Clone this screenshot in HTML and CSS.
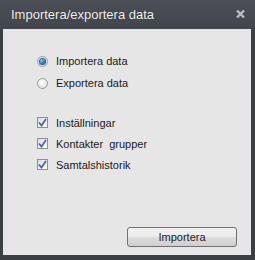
FILE: index.html
```html
<!DOCTYPE html>
<html lang="sv">
<head>
    <meta charset="UTF-8">
    <title>Importera/exportera data</title>
    <link rel="stylesheet" href="styles.css">
</head>
<body>
    <div class="dialog">
        <div class="dialog-title">
            <span>Importera/exportera data</span>
            <svg class="dialog-close" width="9" height="8" viewBox="0 0 9 8"><path d="M1 0.5 L8 7.5 M8 0.5 L1 7.5" stroke="#b9bdc4" stroke-width="2.4"/></svg>
        </div>
        <div class="dialog-body">
            <div class="group">
                <label class="option"><span class="radio checked"></span>Importera data</label>
                <label class="option"><span class="radio"></span>Exportera data</label>
            </div>
            <div class="group checks">
                <label class="option check-row">
                    <span class="checkbox"><svg width="9" height="9" viewBox="0 0 9 9"><path d="M1 4.5 L3.5 7.5 L8 1" fill="none" stroke="#3a62be" stroke-width="1.7"/></svg></span>Inställningar
                </label>
                <label class="option check-row">
                    <span class="checkbox"><svg width="9" height="9" viewBox="0 0 9 9"><path d="M1 4.5 L3.5 7.5 L8 1" fill="none" stroke="#3a62be" stroke-width="1.7"/></svg></span>Kontakter&nbsp; grupper
                </label>
                <label class="option check-row">
                    <span class="checkbox"><svg width="9" height="9" viewBox="0 0 9 9"><path d="M1 4.5 L3.5 7.5 L8 1" fill="none" stroke="#3a62be" stroke-width="1.7"/></svg></span>Samtalshistorik
                </label>
            </div>
            <div class="actions">
                <button class="btn">Importera</button>
            </div>
        </div>
    </div>
</body>
</html>
```

FILE: styles.css
```css
* {
    margin: 0;
    padding: 0;
    box-sizing: border-box;
    font-family: 'Liberation Sans', Arial, sans-serif;
}
body {
    background: #3c3f44;
}
.dialog {
    width: 255px;
    height: 260px;
    display: flex;
    flex-direction: column;
    background: #3c3f44;
    padding: 0 4px 5px 3px;
}
.dialog-title {
    height: 29px;
    display: flex;
    align-items: center;
    justify-content: space-between;
    margin: 0 -4px 0 -3px;
    padding: 0 10px 1px 11px;
    background: linear-gradient(#4b4e54, #43464c);
    color: #f2f2f2;
    font-size: 13px;
    text-shadow: 0 0 1px rgba(0, 0, 0, 0.6);
}
.dialog-body {
    flex: 1;
    background: #e6e6e6;
    display: flex;
    flex-direction: column;
    padding: 21px 14px 8px 34px;
    font-size: 11px;
    color: #1a1a1a;
}
.group {
    display: flex;
    flex-direction: column;
}
.option {
    height: 22px;
    display: flex;
    align-items: center;
    gap: 8px;
}
.checks {
    margin-top: 18px;
}
.check-row {
    height: 21px;
}
.radio {
    width: 11px;
    height: 11px;
    border-radius: 50%;
    border: 1px solid #9a9a9a;
    background: radial-gradient(circle at 40% 35%, #ffffff, #d8d8d8);
    display: flex;
    align-items: center;
    justify-content: center;
}
.radio.checked::after {
    content: '';
    width: 5px;
    height: 5px;
    border-radius: 50%;
    background: radial-gradient(circle at 35% 30%, #7fd0ff, #0f5fae 70%);
    box-shadow: 0 0 0 1px #1d5c9a;
}
.checkbox {
    width: 11px;
    height: 11px;
    border: 1px solid #8e8f91;
    background: linear-gradient(135deg, #dcdcdc, #ffffff);
    display: flex;
    align-items: center;
    justify-content: center;
}
.actions {
    margin-top: auto;
    display: flex;
    justify-content: flex-end;
}
.btn {
    width: 110px;
    height: 20px;
    border: 1px solid #707070;
    border-radius: 3px;
    background: linear-gradient(#f2f2f2 0%, #ebebeb 50%, #dddddd 51%, #cfcfcf 100%);
    font-size: 11px;
    color: #1a1a1a;
}
```
